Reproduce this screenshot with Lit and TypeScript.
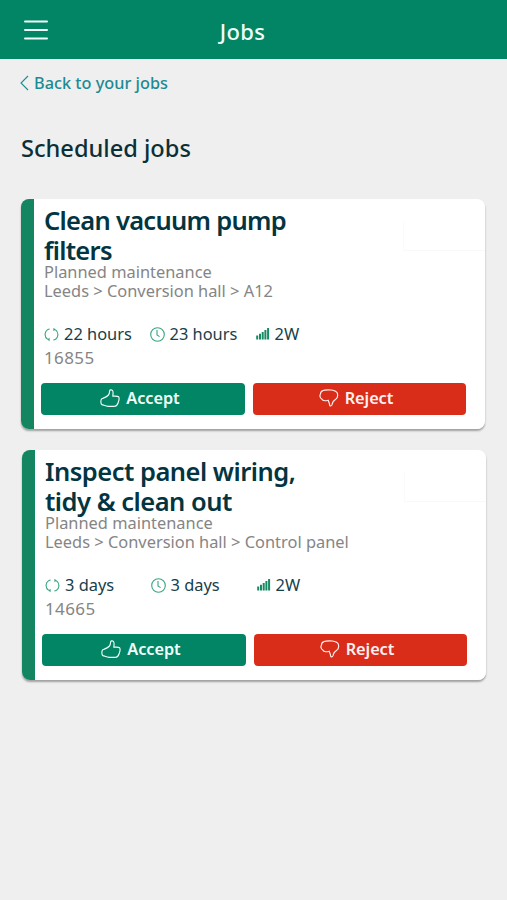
import { LitElement, html, css } from "lit";
import { customElement, property } from "lit/decorators.js";
import { styleMap } from "lit/directives/style-map.js";

interface Job {
  title: string[];
  tracking: number;
  kind: string;
  place: string;
  repeat: string;
  due: string;
  effort: string;
  ref: string;
}

const jobs: Job[] = [
  {
    title: ["Clean vacuum pump", "filters"],
    tracking: -0.72,
    kind: "Planned maintenance",
    place: "Leeds > Conversion hall > A12",
    repeat: "22 hours",
    due: "23 hours",
    effort: "2W",
    ref: "16855",
  },
  {
    title: ["Inspect panel wiring,", "tidy & clean out"],
    tracking: -0.5,
    kind: "Planned maintenance",
    place: "Leeds > Conversion hall > Control panel",
    repeat: "3 days",
    due: "3 days",
    effort: "2W",
    ref: "14665",
  },
];

@customElement("job-card")
export class JobCard extends LitElement {
  @property({ attribute: false }) job!: Job;

  static styles = css`
    :host {
      display: block;
      position: relative;
      box-sizing: border-box;
      width: 464px;
      height: 230px;
      padding: 6px 19px 0 23px;
      border-radius: 8px;
      background: linear-gradient(to right, #138561 13px, #fff 13px);
      box-shadow: 0 2px 2px rgba(0, 0, 0, 0.33);
    }
    .flag {
      position: absolute;
      right: 0;
      top: 22px;
      width: 81px;
      height: 29px;
      border-left: 1px solid #fbfbfb;
      border-bottom: 1px solid #f8f9f9;
    }
    h2 {
      margin: 0;
      font-size: 25.5px;
      line-height: 30px;
      font-weight: 600;
      color: #033541;
    }
    h2 span {
      display: block;
      white-space: nowrap;
    }
    .meta {
      font-size: 16.4px;
      line-height: 19px;
      color: #858585;
      white-space: nowrap;
      margin-top: -3px;
    }
    .stats {
      display: grid;
      grid-template-columns: 105.5px 106px 1fr;
      margin-top: 20px;
      height: 26px;
      align-items: center;
      font-size: 16.4px;
      color: #17404a;
      white-space: nowrap;
    }
    .stat {
      display: flex;
      align-items: center;
    }
    .stat svg {
      width: 15px;
      height: 15px;
      margin: 2px 5px 0 0;
      fill: none;
      stroke: #3aa57f;
      stroke-width: 1.1;
    }
    .stat svg.bars {
      width: 14px;
      margin: 0 5px 0 0;
      fill: #168a62;
      stroke: none;
    }
    .ref {
      font-size: 17px;
      line-height: 22px;
      margin-top: 1px;
      letter-spacing: 0.4px;
      color: #858585;
    }
    .actions {
      display: grid;
      grid-template-columns: 204px 213px;
      gap: 8px;
      margin: 14px 0 0 -3px;
    }
    button {
      display: flex;
      align-items: center;
      justify-content: center;
      gap: 6px;
      height: 32px;
      padding: 0 6px 2px 0;
      border: 0;
      border-radius: 4px;
      background: #028564;
      color: #f2fffa;
      font: 600 16.3px/30px "Noto Sans", sans-serif;
      letter-spacing: -0.05px;
    }
    button.reject {
      background: #d92d1a;
      color: #fff1ee;
      padding-right: 7px;
    }
    button svg {
      width: 20px;
      height: 18px;
      fill: none;
      stroke: currentColor;
      stroke-width: 1.15;
      stroke-linejoin: round;
    }
  `;

  render() {
    const j = this.job;
    return html`
      <div class="flag"></div>
      <h2 style=${styleMap({ letterSpacing: `${j.tracking}px` })}>
        ${j.title.map((line) => html`<span>${line}</span>`)}
      </h2>
      <div class="meta">${j.kind}<br />${j.place}</div>
      <div class="stats">
        <div class="stat">
          <svg viewBox="0 0 15 15">
            <path d="M5.6 2C.6 3-.4 9.4 3.6 12.2M9.4 13C14.4 12 15.4 5.6 11.4 2.8" />
            <path d="M5.6 10.8V14.2L3.2 12.6ZM9.4 4.2V.8L11.8 2.4Z" fill="#3aa57f" stroke="none" />
          </svg>
          <span>${j.repeat}</span>
        </div>
        <div class="stat">
          <svg viewBox="0 0 15 15">
            <circle cx="7.5" cy="7.5" r="6.8" />
            <path d="M7 3V8L9.6 9.6" />
          </svg>
          <span>${j.due}</span>
        </div>
        <div class="stat">
          <svg class="bars" viewBox="0 0 14 15">
            <path d="M.2 9.4h2v4h-2zM3 7.8h2v5.6h-2zM5.7 6h2v7.4h-2zM8.4 4h2v9.4h-2zM11.1 2h2v11.4h-2z" />
          </svg>
          <span>${j.effort}</span>
        </div>
      </div>
      <div class="ref">${j.ref}</div>
      <div class="actions">
        <button>
          <svg viewBox="0 0 20 18">
            <path d="M8.5 6C6.5 8.3 4 8.8 1.8 9.8C.6 10.6 .5 14.5 1.8 15.6C4 16 5 17.3 8.5 17.3H14.5C17 17.2 17.5 15.5 18.2 13.5C19 11.5 19.4 9 18.6 7.8C17.5 6.8 15.5 7 12.8 7.2C13 5 13.6 2.5 12.4 1.4C11.2 .4 9.8 .8 9.6 2.2C9.5 3.8 9.4 4.8 8.5 6Z" />
          </svg>
          <span>Accept</span>
        </button>
        <button class="reject">
          <svg viewBox="0 0 20 18">
            <path d="M4 1.6C6 .7 10 .8 12.5 1C15 1.2 18.8 3 18.5 5.2C19 8 18.6 9.3 16.5 10.4C14.5 11.5 13.4 13 13.1 15.5C12.7 17.3 10.8 17.3 10.6 15.8C10.5 14 9.5 13 9.2 11.2C6.5 12 3.5 11.8 2.8 10C.8 9 .5 6.5 1.5 5C1.5 3.3 2.5 2.1 4 1.6Z" />
          </svg>
          <span>Reject</span>
        </button>
      </div>
    `;
  }
}

@customElement("app-root")
export class AppRoot extends LitElement {
  static styles = css`
    :host {
      display: block;
      height: 900px;
      overflow: hidden;
      background: #efefef;
      font-family: "Noto Sans", sans-serif;
    }
    header {
      display: grid;
      grid-template-columns: 24px 1fr 24px;
      align-items: center;
      height: 59px;
      padding: 0 22px 0 24px;
      box-sizing: border-box;
      background: #028564;
      color: #effff9;
      text-align: center;
    }
    header svg {
      width: 24px;
      height: 20px;
      stroke: currentColor;
      stroke-width: 2;
      stroke-linecap: round;
    }
    header h1 {
      margin: 2px 0 0 -24px;
      font-size: 22px;
      font-weight: 500;
      line-height: 28px;
      letter-spacing: 0.3px;
    }
    .back {
      display: flex;
      align-items: center;
      gap: 5px;
      height: 22px;
      margin: 13px 0 0 20px;
      font-size: 16.3px;
      font-weight: 550;
      color: #1c8a94;
      white-space: nowrap;
    }
    .back svg {
      width: 9px;
      height: 16px;
      fill: none;
      stroke: currentColor;
      stroke-width: 1.1;
    }
    .back span {
      margin-top: -1px;
    }
    h3 {
      margin: 38px 0 0 21px;
      font-size: 23.6px;
      line-height: 32px;
      font-weight: 500;
      color: #0b2f38;
    }
    main {
      display: flex;
      flex-direction: column;
      gap: 21px;
      margin: 35px 0 0 21px;
    }
    job-card + job-card {
      margin-left: 1px;
    }
  `;

  render() {
    return html`
      <header>
        <svg viewBox="0 0 24 20"><path d="M1 1.5H23M1 10H23M1 18.5H23" /></svg>
        <h1>Jobs</h1>
      </header>
      <div class="back">
        <svg viewBox="0 0 9 16"><path d="M8 1L1 8L8 15" /></svg>
        <span>Back to your jobs</span>
      </div>
      <h3>Scheduled jobs</h3>
      <main>${jobs.map((job) => html`<job-card .job=${job}></job-card>`)}</main>
    `;
  }
}
